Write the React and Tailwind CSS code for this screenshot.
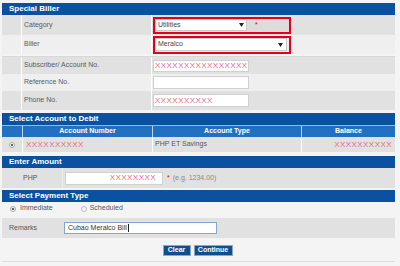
import React from "react";

const X = ({ n, className = "" }) => (
  <span className={"text-[#e56a86] text-[8px] tracking-[0.45px] leading-none " + className}>
    {"X".repeat(n)}
  </span>
);

const Header = ({ children, className = "" }) => (
  <div className={"h-[12px] bg-[#0a51a1] text-white font-bold text-[8px] pl-[7px] flex items-center leading-none " + className}>
    {children}
  </div>
);

const Caret = () => (
  <svg width="5" height="4" viewBox="0 0 5 4" className="shrink-0">
    <path d="M0 0H5L2.5 4Z" fill="#222" />
  </svg>
);

const Row = ({ h, bg, children }) => (
  <div className={"flex " + h + " " + bg}>
    <div className="w-[20px] border-r border-white" />
    {children}
  </div>
);

const Label = ({ children }) => (
  <div className="w-[130px] border-r border-white pl-[2px] flex items-center text-[7px] text-[#5a5a5a]">
    {children}
  </div>
);

export default function App() {
  return (
    <div className="w-[400px] h-[266px] bg-[#f4f4f4] pt-[3px] pl-[2px] pr-[5px] font-['Liberation_Sans',Arial,sans-serif] overflow-hidden">
      <Header>Special Biller</Header>
      <Row h="h-[20px]" bg="bg-[#e1e1e1]">
        <Label>Category</Label>
        <div className="flex-1 flex items-center pl-[1px]">
          <div className="w-[138px] h-[17px] border-2 border-[#e4001a] flex items-center">
            <div className="w-[92px] h-[12px] bg-white border border-[#c9c9c9] ml-[0px] flex items-center justify-between pl-[2px] pr-[2px] text-[7px] text-[#444]">
              <span>Utilities</span>
              <Caret />
            </div>
            <div className="flex-1 h-full bg-[#dcdcdc] pl-[8px] text-[#e4001a] text-[7px] leading-none pt-[2px]">*</div>
          </div>
        </div>
      </Row>
      <Row h="h-[19px]" bg="bg-[#efefef]">
        <Label>Biller</Label>
        <div className="flex-1 flex items-center pl-[1px]">
          <div className="w-[138px] h-[18px] border-2 border-[#e4001a] flex items-center">
            <div className="w-[132px] h-[13px] bg-white border border-[#c9c9c9] flex items-center justify-between pl-[2px] pr-[3px] text-[7px] text-[#444]">
              <span>Meralco</span>
              <Caret />
            </div>
          </div>
        </div>
      </Row>
      <div className="h-[3px] border-b border-[#d8d8d8]" />
      <Row h="h-[17px]" bg="bg-[#e1e1e1]">
        <Label>Subscriber/ Account No.</Label>
        <div className="flex-1 flex items-center pl-[1px]">
          <div className="w-[96px] h-[12px] bg-white border border-[#d0d0d0] flex items-center pl-[1px]">
            <X n={16} />
          </div>
        </div>
      </Row>
      <Row h="h-[17px]" bg="bg-[#efefef]">
        <Label>Reference No.</Label>
        <div className="flex-1 flex items-center pl-[1px]">
          <div className="w-[96px] h-[13px] bg-white border border-[#d0d0d0]" />
        </div>
      </Row>
      <Row h="h-[19px]" bg="bg-[#e1e1e1]">
        <Label>Phone No.</Label>
        <div className="flex-1 flex items-center pl-[1px]">
          <div className="w-[96px] h-[13px] bg-white border border-[#d0d0d0] flex items-center pl-[1px]">
            <X n={10} />
          </div>
        </div>
      </Row>
      <div className="h-[3px]" />
      <Header>Select Account to Debit</Header>
      <div className="flex h-[12px] bg-[#2270c2] text-white font-bold text-[7px] border-t border-[#9bb9dc]">
        <div className="w-[21px] border-r border-[#c2d4ea]" />
        <div className="w-[130px] border-r border-[#c2d4ea] flex items-center justify-center">Account Number</div>
        <div className="w-[149px] border-r border-[#c2d4ea] flex items-center justify-center">Account Type</div>
        <div className="flex-1 flex items-center justify-center">Balance</div>
      </div>
      <div className="flex h-[15px] bg-[#e1e1e1] text-[7px] text-[#555]">
        <div className="w-[21px] border-r border-white flex items-center justify-center">
          <div className="w-[6px] h-[6px] rounded-full bg-[#f4f4f4] border border-[#aaa] flex items-center justify-center">
            <div className="w-[2px] h-[2px] rounded-full bg-[#333]" />
          </div>
        </div>
        <div className="w-[130px] border-r border-white flex items-center pl-[3px]"><X n={10} /></div>
        <div className="w-[149px] border-r border-white flex items-center pl-[2px]">PHP ET Savings</div>
        <div className="flex-1 flex items-center justify-end pr-[3px]"><X n={10} /></div>
      </div>
      <div className="h-[4px]" />
      <Header>Enter Amount</Header>
      <div className="flex h-[20px] bg-[#e1e1e1] items-center text-[7px]">
        <div className="w-[61px] border-r border-[#ececec] h-full flex items-center pl-[21px] text-[#555]">PHP</div>
        <div className="w-[98px] h-[13px] ml-[2px] bg-white border border-[#d0d0d0] flex items-center justify-end pr-[6px]">
          <X n={8} />
        </div>
        <span className="text-[#e4001a] ml-[4px]">*</span>
        <span className="text-[#8a8a8a] ml-[3px]">(e.g. 1234.00)</span>
      </div>
      <div className="h-[2px]" />
      <Header>Select Payment Type</Header>
      <div className="flex h-[13px] items-center text-[7px] text-[#555]">
        <div className="w-[6px] h-[6px] ml-[8px] rounded-full bg-[#f4f4f4] border border-[#aaa] flex items-center justify-center">
          <div className="w-[2px] h-[2px] rounded-full bg-[#333]" />
        </div>
        <span className="ml-[4px]">Immediate</span>
        <div className="w-[6px] h-[6px] ml-[28px] rounded-full bg-[#f4f4f4] border border-[#bbb]" />
        <span className="ml-[3px]">Scheduled</span>
      </div>
      <div className="h-[3px]" />
      <div className="flex h-[20px] bg-[#e1e1e1] items-center text-[7px]">
        <div className="w-[61px] h-full flex items-center pl-[7px] text-[#555]">Remarks</div>
        <div className="w-[153px] h-[12px] ml-[1px] bg-white border border-[#7ea6d6] flex items-center pl-[3px] text-[#333]">
          Cubao Meralco Bill<span className="w-[1px] h-[8px] bg-[#222] ml-[1px]" />
        </div>
      </div>
      <div className="flex h-[24px] items-center justify-center gap-[3px] pr-[2px] pt-[2px] border-b border-[#dedede]">
        <div className="w-[28px] h-[11px] bg-[#0f4f90] border border-[#8aa6c9] text-white font-bold text-[7px] flex items-center justify-center">Clear</div>
        <div className="w-[39px] h-[11px] bg-[#0f4f90] border border-[#8aa6c9] text-white font-bold text-[7px] flex items-center justify-center">Continue</div>
      </div>
    </div>
  );
}
